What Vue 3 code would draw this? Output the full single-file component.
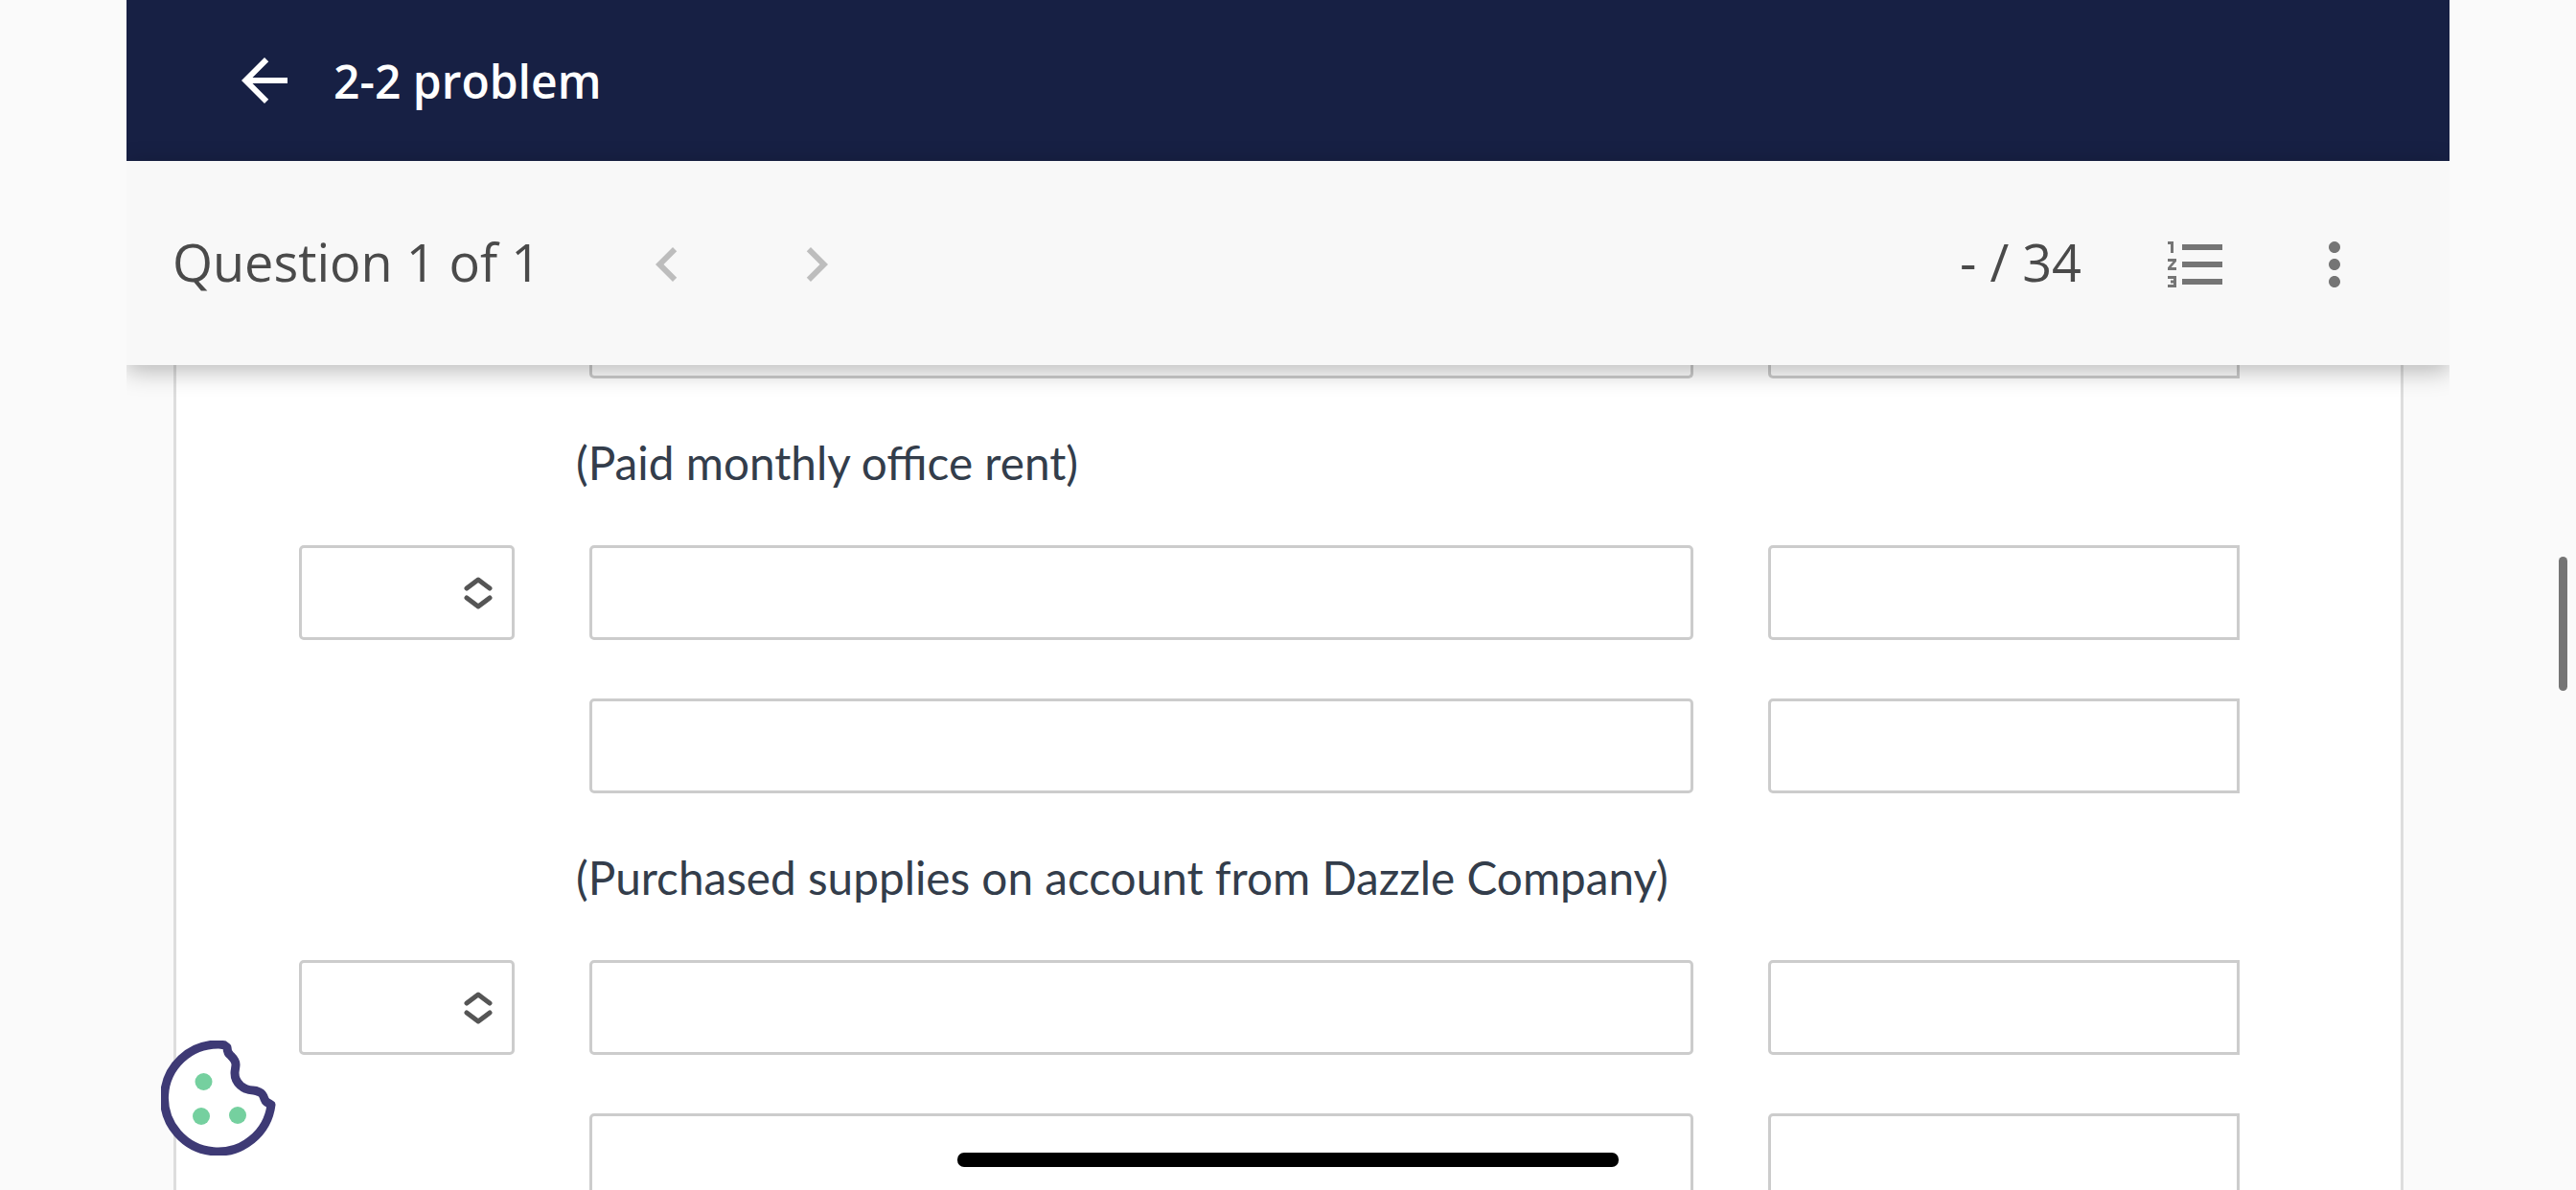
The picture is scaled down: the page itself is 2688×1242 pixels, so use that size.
<script setup>
const sections = [
  { label: '', stub: true },
  { label: '(Paid monthly office rent)', rows: [true, false] },
  { label: '(Purchased supplies on account from Dazzle Company)', rows: [true, false] }
]
</script>

<template>
  <div class="page">
    <main class="column">
      <header class="topbar">
        <svg class="icon" viewBox="0 0 24 24" fill="#fff"><path d="M20 11H7.83l5.59-5.59L12 4l-8 8 8 8 1.41-1.41L7.83 13H20v-2z" /></svg>
        <span class="title">2-2 problem</span>
      </header>
      <div class="toolbar">
        <span class="count question">Question 1 of 1</span>
        <div class="pager">
          <svg class="icon" viewBox="0 0 24 24" fill="#bdbdbd"><path d="M15.41 7.41L14 6l-6 6 6 6 1.41-1.41L10.83 12z" /></svg>
          <svg class="icon" viewBox="0 0 24 24" fill="#bdbdbd"><path d="M10 6L8.59 7.41 13.17 12l-4.58 4.59L10 18l6-6z" /></svg>
        </div>
        <span class="count score">- / 34</span>
        <svg class="icon" viewBox="0 0 24 24" fill="#757575"><path d="M2 17h2v.5H3v1h1v.5H2v1h3v-4H2zm1-9h1V4H2v1h1v3zm-1 3h1.8L2 13.1v.9h3v-1H3.2L5 10.9V10H2v1zm5-6v2h14V5H7zm0 14h14v-2H7v2zm0-6h14v-2H7v2z" /></svg>
        <svg class="icon more" viewBox="0 0 24 24" fill="#757575"><path d="M12 8c1.1 0 2-.9 2-2s-.9-2-2-2-2 .9-2 2 .9 2 2 2zm0 2c-1.1 0-2 .9-2 2s.9 2 2 2 2-.9 2-2-.9-2-2-2zm0 6c-1.1 0-2 .9-2 2s.9 2 2 2 2-.9 2-2-.9-2-2-2z" /></svg>
      </div>
      <section class="card">
        <template v-for="(section, i) in sections" :key="i">
          <div v-if="section.stub" class="row stub">
            <span></span>
            <div class="field"></div>
            <div class="field amount"></div>
          </div>
          <template v-else>
            <p class="label">{{ section.label }}</p>
            <div class="rows">
              <div v-for="(hasSelect, r) in section.rows" :key="r" class="row">
                <div v-if="hasSelect" class="select">
                  <svg class="updown" viewBox="0 0 32 36" fill="none" stroke="#555" stroke-width="5" stroke-linecap="round" stroke-linejoin="round">
                    <path d="M4 12 16 3l12 9" />
                    <path d="M4 22l12 9 12-9" />
                  </svg>
                </div>
                <span v-else></span>
                <div class="field"></div>
                <div class="field amount"></div>
              </div>
            </div>
          </template>
        </template>
      </section>
    </main>

    <div class="scroll-thumb"></div>
    <div class="home-bar"></div>
    <svg class="cookie" viewBox="0 0 120 120">
      <path d="M66 4.7C62 4 60 4 60 4a56 56 0 1 0 55 63c-4-2-6-3-7-6s-2-6-5-7c-2-1-5-2-7-2-10 0-19-8-19-18 0-3 1-6 1-9 0-3-3-7-5-9-3-2-4-6-4-9z" fill="#fff" stroke="#3e3a75" stroke-width="9" stroke-linejoin="round" />
      <circle cx="44.5" cy="43" r="9" fill="#75d09f" />
      <circle cx="42" cy="79" r="9" fill="#75d09f" />
      <circle cx="80" cy="78" r="9" fill="#75d09f" />
    </svg>
  </div>
</template>

<style scoped>
.page {
  position: relative;
  width: 2688px;
  height: 1242px;
  overflow: hidden;
  background: #fafafa;
}
.column {
  display: flex;
  flex-direction: column;
  width: 2424px;
  height: 1242px;
  margin-left: 132px;
  overflow: hidden;
}
.topbar {
  display: flex;
  align-items: center;
  flex: none;
  height: 168px;
  padding-left: 108px;
  background: #172044;
}
.icon {
  flex: none;
  width: 72px;
  height: 72px;
}
.title {
  margin-left: 36px;
  color: #fff;
  font: 600 48px "Open Sans", sans-serif;
}
.toolbar {
  position: relative;
  z-index: 1;
  display: flex;
  align-items: center;
  flex: none;
  height: 213px;
  padding: 3px 84px 0 48px;
  box-sizing: border-box;
  background: #f8f8f8;
  box-shadow: 0 6px 24px rgba(0, 0, 0, 0.28);
}
.count {
  margin-bottom: 6px;
  color: #4a4a4a;
  font: 400 54px "Open Sans", sans-serif;
}
.question {
  width: 480px;
}
.pager {
  display: flex;
  gap: 84px;
}
.score {
  margin-left: auto;
  margin-right: 84px;
}
.more {
  margin-left: 72px;
}
.card {
  flex: 1;
  width: 2327px;
  margin-left: 49px;
  box-sizing: border-box;
  border-left: 3px solid #ddd;
  border-right: 3px solid #ddd;
  background: #fff;
}
.row {
  display: grid;
  grid-template-columns: 225px 1152px 492px;
  column-gap: 78px;
  height: 99px;
  padding-left: 128px;
}
.stub {
  height: 14px;
}
.stub .field {
  border-top: 0;
  border-radius: 0 0 5px 5px;
}
.rows {
  display: flex;
  flex-direction: column;
  gap: 61px;
}
.label {
  display: flex;
  align-items: center;
  height: 174px;
  margin: 0;
  padding-left: 417px;
  color: #333d4b;
  font: 400 47.7px Lato, sans-serif;
}
.select,
.field {
  box-sizing: border-box;
  height: 100%;
  border: 3px solid #ccc;
  border-radius: 5px;
  background: #fff;
}
.amount {
  border-radius: 5px 0 0 5px;
}
.stub .amount {
  border-radius: 0 0 0 5px;
}
.select {
  position: relative;
}
.updown {
  position: absolute;
  top: 30px;
  left: 168px;
  width: 32px;
  height: 36px;
}
.scroll-thumb {
  position: absolute;
  top: 581px;
  left: 2670px;
  width: 9px;
  height: 140px;
  border-radius: 5px;
  background: #757575;
}
.home-bar {
  position: absolute;
  top: 1203px;
  left: 999px;
  width: 690px;
  height: 15px;
  border-radius: 7px;
  background: #000;
}
.cookie {
  position: absolute;
  top: 1086px;
  left: 168px;
  width: 120px;
  height: 120px;
}
</style>

<style>
html, body {
  margin: 0;
  overflow: hidden;
}
</style>
